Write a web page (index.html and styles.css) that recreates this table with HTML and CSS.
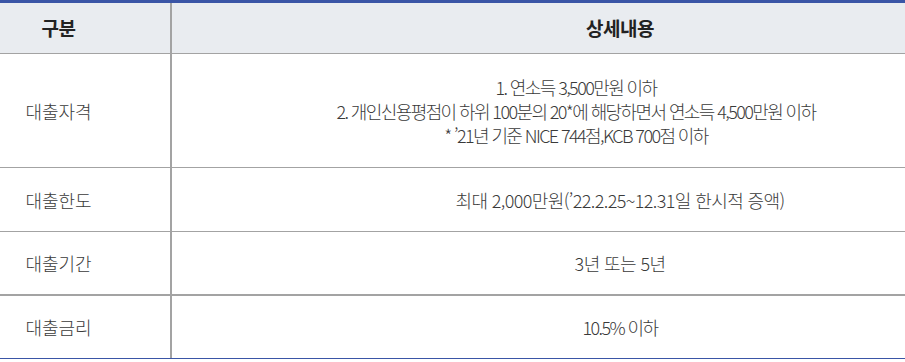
FILE: index.html
```html
<!DOCTYPE html>
<html lang="ko">
<head>
<meta charset="utf-8">
<link rel="stylesheet" href="styles.css">
</head>
<body>
<div class="tbl">
  <div class="row head">
    <div class="c1">구분</div>
    <div class="c2">상세내용</div>
  </div>
  <div class="row r1">
    <div class="c1">대출자격</div>
    <div class="c2 multi">1. 연소득 3,500만원 이하<br>2. 개인신용평점이 하위 100분의 20*에 해당하면서 연소득 4,500만원 이하<br>* ’21년 기준 NICE 744점,KCB 700점 이하</div>
  </div>
  <div class="row r2">
    <div class="c1">대출한도</div>
    <div class="c2">최대 2,000만원(’22.2.25~12.31일 한시적 증액)</div>
  </div>
  <div class="row r3">
    <div class="c1">대출기간</div>
    <div class="c2">3년 또는 5년</div>
  </div>
  <div class="row r4">
    <div class="c1">대출금리</div>
    <div class="c2">10.5% 이하</div>
  </div>
</div>
</body>
</html>
```
FILE: styles.css
```css
html, body {
  margin: 0;
  padding: 0;
  background: #fff;
}
.tbl {
  width: 905px;
  border-top: 3px solid #3a55a6;
  border-bottom: 1px solid #3a55a6;
  font-family: "Noto Sans CJK KR", "Noto Sans", sans-serif;
  font-size: 18px;
  font-weight: 300;
  color: #3a3a3a;
  letter-spacing: -1.6px;
}
.row {
  display: grid;
  grid-template-columns: 170px 1fr;
  border-bottom: 1px solid #a3a3a3;
  line-height: 24px;
}
.row > div {
  display: flex;
  align-items: center;
  justify-content: center;
  text-align: center;
}
.c1 {
  padding-right: 53px;
  letter-spacing: 0;
}
.c2 {
  border-left: 2px solid #a3a3a3;
  padding-left: 163px;
}
.head {
  height: 50px;
  background: #e9ecf0;
  font-weight: 700;
  font-size: 19px;
  color: #222;
}
.head .c1,
.head .c2 {
  letter-spacing: -0.5px;
}
.r1 { height: 113px; }
.r1 .c2 { padding-left: 75px; }
.r2 { height: 63px; }
.r2 .c2 { letter-spacing: -0.6px; }
.r3 { height: 62px; border-bottom-width: 2px; }
.r3 .c2 { letter-spacing: -0.6px; }
.r4 { height: 62px; border-bottom: none; }
```
